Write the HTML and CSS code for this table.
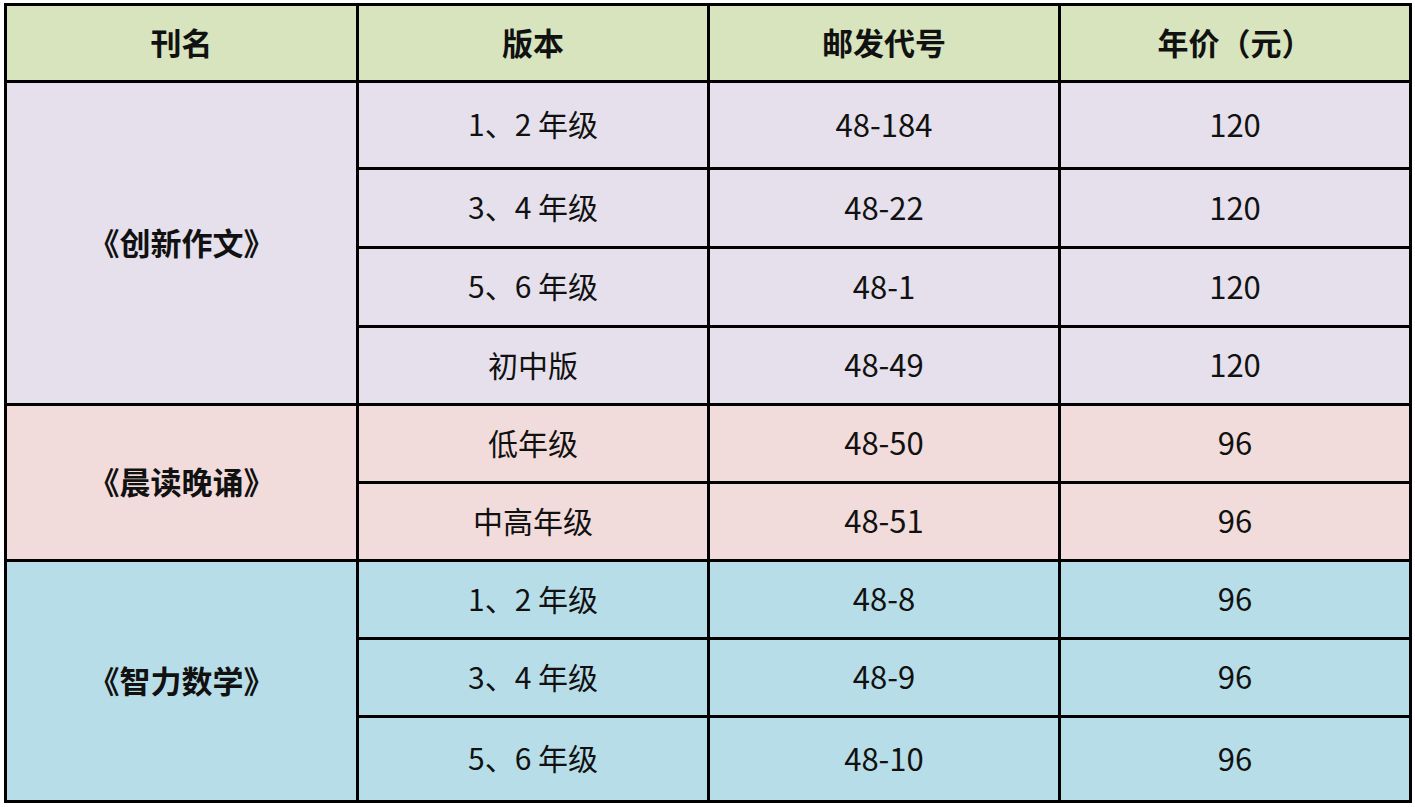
FILE: index.html
```html
<!DOCTYPE html>
<html lang="zh-CN">
<head>
<meta charset="utf-8">
<title>刊物订阅表</title>
<link rel="stylesheet" href="styles.css">
</head>
<body>
<div class="table">
  <div class="cell head">刊名</div>
  <div class="cell head">版本</div>
  <div class="cell head">邮发代号</div>
  <div class="cell head">年价（元）</div>

  <div class="cell title purple span4">《创新作文》</div>
  <div class="cell purple">1、2 年级</div><div class="cell purple num">48-184</div><div class="cell purple num">120</div>
  <div class="cell purple">3、4 年级</div><div class="cell purple num">48-22</div><div class="cell purple num">120</div>
  <div class="cell purple">5、6 年级</div><div class="cell purple num">48-1</div><div class="cell purple num">120</div>
  <div class="cell purple">初中版</div><div class="cell purple num">48-49</div><div class="cell purple num">120</div>

  <div class="cell title pink span2">《晨读晚诵》</div>
  <div class="cell pink">低年级</div><div class="cell pink num">48-50</div><div class="cell pink num">96</div>
  <div class="cell pink">中高年级</div><div class="cell pink num">48-51</div><div class="cell pink num">96</div>

  <div class="cell title blue span3">《智力数学》</div>
  <div class="cell blue">1、2 年级</div><div class="cell blue num">48-8</div><div class="cell blue num">96</div>
  <div class="cell blue">3、4 年级</div><div class="cell blue num">48-9</div><div class="cell blue num">96</div>
  <div class="cell blue">5、6 年级</div><div class="cell blue num">48-10</div><div class="cell blue num">96</div>
</div>
</body>
</html>
```

FILE: styles.css
```css
html, body {
  margin: 0;
  padding: 0;
  background: #ffffff;
}

body {
  font-family: "Noto Sans CJK SC", "Noto Sans", sans-serif;
  color: #111111;
}

.table {
  display: grid;
  grid-template-columns: 349px 348px 348px 348px;
  grid-template-rows: 74px 84px 76px 76px 75px 75px 75px 75px 75px 82px;
  gap: 3px;
  padding: 3px;
  background: #000000;
  width: max-content;
  margin: 3px 0 0 4px;
}

.cell {
  display: flex;
  align-items: center;
  justify-content: center;
  font-size: 30px;
  line-height: 1;
  white-space: pre;
  padding-bottom: 4px;
  box-sizing: border-box;
}

.head {
  background: #d7e4bd;
  font-weight: 700;
  font-size: 31px;
}

.title {
  font-weight: 700;
  font-size: 31px;
}

.num {
  font-weight: 400;
  font-size: 31px;
}

.purple { background: #e5e0ec; }
.pink { background: #f2dcdb; }
.blue { background: #b7dee8; }

.span4 { grid-row: span 4; }
.span3 { grid-row: span 3; }
.span2 { grid-row: span 2; }
```
